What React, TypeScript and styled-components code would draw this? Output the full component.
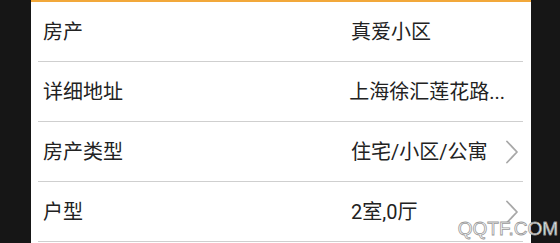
import React from 'react';
import styled, { createGlobalStyle } from 'styled-components';

const GlobalStyle = createGlobalStyle`
  html, body {
    margin: 0;
    padding: 0;
    background: #161616;
    font-family: Roboto, "Noto Sans CJK SC", sans-serif;
  }
`;

//one row of the house info form
interface RowItem {
  label: string;
  value: string;
  arrow?: boolean;
}

const rows: RowItem[] = [
  { label: '房产', value: '真爱小区' },
  { label: '详细地址', value: '上海徐汇莲花路...' },
  { label: '房产类型', value: '住宅/小区/公寓', arrow: true },
  { label: '户型', value: '2室,0厅', arrow: true }
];

function Chevron() {
  return (
    <svg width="14" height="24" viewBox="0 0 14 24" fill="none">
      <path d="M2 1.5 L12 12 L2 22.5" stroke="#a8a8a8" strokeWidth="1.8" strokeLinecap="round" strokeLinejoin="round" />
    </svg>
  );
}

export default function App() {
  return (
    <Screen>
      <GlobalStyle />
      <Panel>
        {rows.map((row) => (
          <Row key={row.label}>
            <Label>{row.label}</Label>
            <Value>{row.value}</Value>
            <Arrow>{row.arrow ? <Chevron /> : null}</Arrow>
          </Row>
        ))}
      </Panel>
      <Watermark>QQTF.COM</Watermark>
    </Screen>
  );
}

const Screen = styled.div`
  position: relative;
  width: 560px;
  height: 243px;
  overflow: hidden;
  background: #161616;
`;

const Panel = styled.div`
  margin-left: 31px;
  width: 500px;
  height: 243px;
  background: #ffffff;
  border-top: 2px solid #f2a83a;
  box-sizing: border-box;
  display: flex;
  flex-direction: column;
`;

const Row = styled.div`
  margin: 0 8px 0 7px;
  height: 60px;
  box-sizing: border-box;
  border-bottom: 1px solid #cfcfcf;
  display: flex;
  align-items: center;
  padding-left: 5px;
  flex-shrink: 0;
`;

const Label = styled.div`
  width: 308px;
  font-size: 20px;
  color: #222222;
  line-height: 1;
`;

const Value = styled.div`
  flex: 1;
  font-size: 20px;
  color: #222222;
  line-height: 1;
  white-space: nowrap;
`;

const Arrow = styled.div`
  width: 14px;
  height: 24px;
  margin-right: 4px;
  display: flex;
  align-items: center;
`;

const Watermark = styled.div`
  position: absolute;
  right: 2px;
  bottom: 3px;
  font-family: "Liberation Sans", Arial, sans-serif;
  font-size: 19px;
  color: #ffffff;
  -webkit-text-stroke: 0.8px #9a9a9a;
`;
